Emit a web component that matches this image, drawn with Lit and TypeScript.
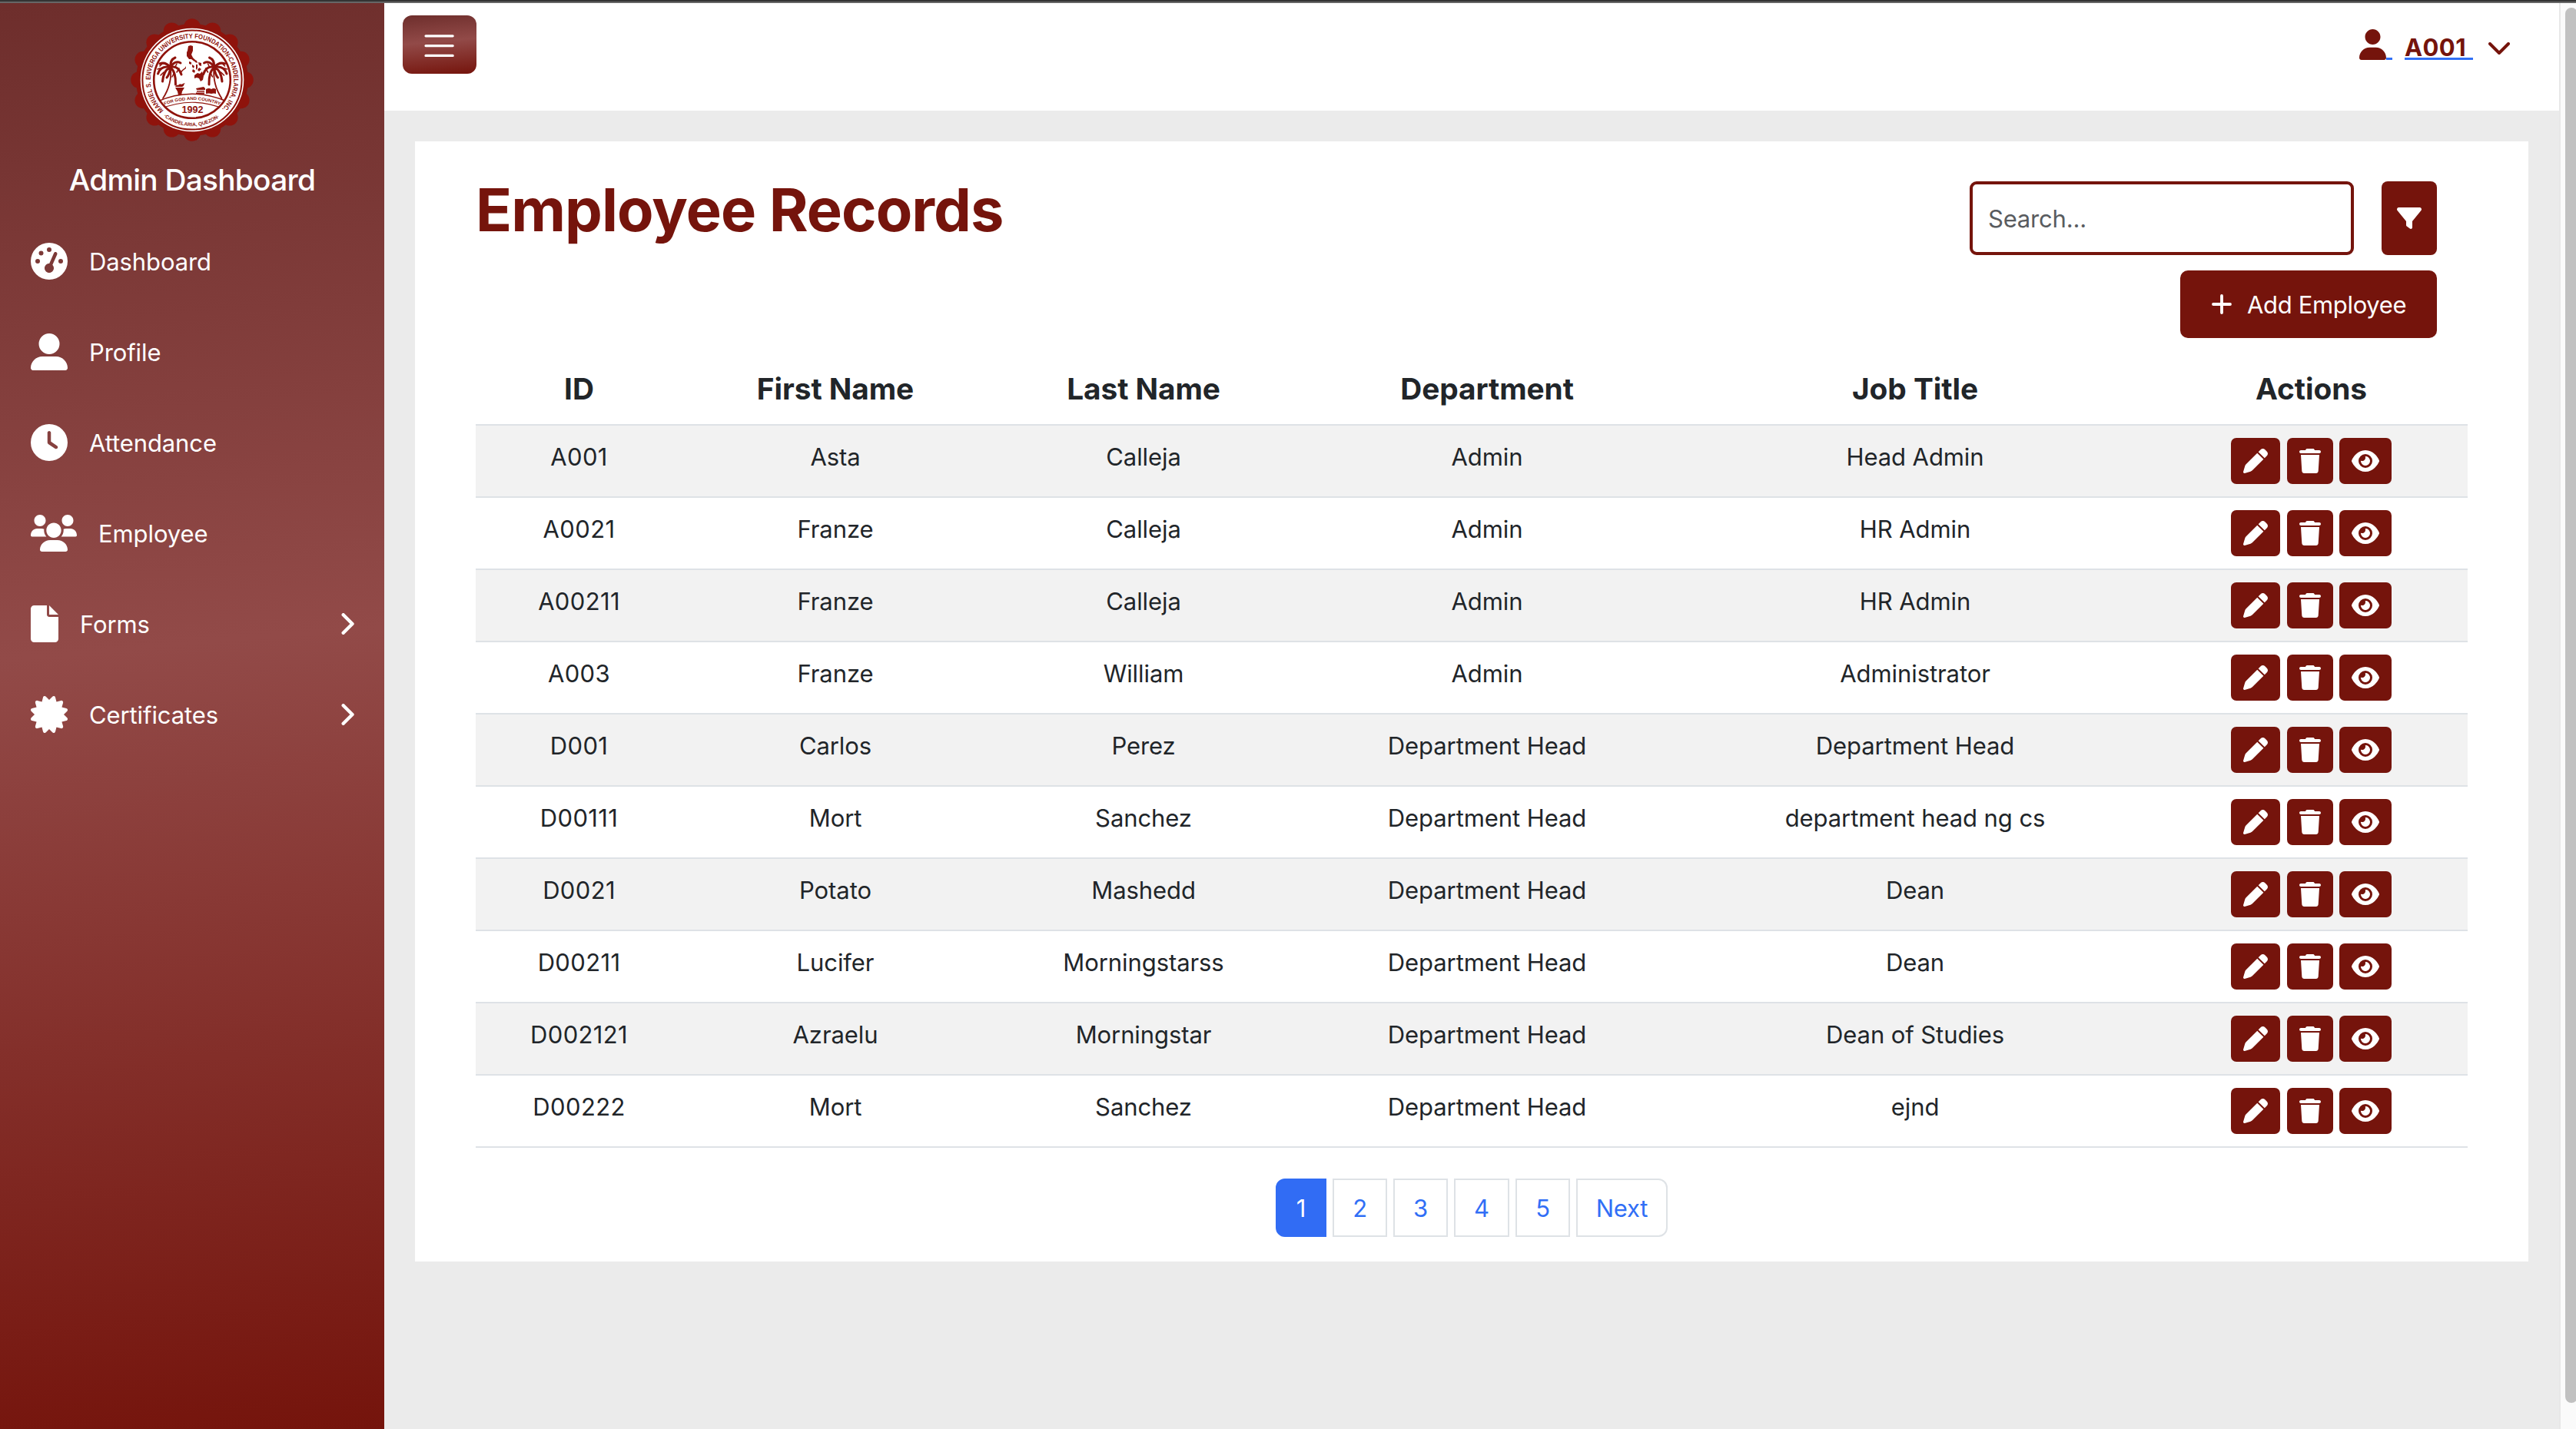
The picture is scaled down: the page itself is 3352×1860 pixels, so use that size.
import { LitElement, html, css, svg } from "lit";
import { customElement } from "lit/decorators.js";

const SEAL = "#8f130c";

interface Employee {
  id: string;
  first: string;
  last: string;
  department: string;
  title: string;
}

const HEADERS = ["ID", "First Name", "Last Name", "Department", "Job Title", "Actions"];

const EMPLOYEES: Employee[] = [
  { id: "A001", first: "Asta", last: "Calleja", department: "Admin", title: "Head Admin" },
  { id: "A0021", first: "Franze", last: "Calleja", department: "Admin", title: "HR Admin" },
  { id: "A00211", first: "Franze", last: "Calleja", department: "Admin", title: "HR Admin" },
  { id: "A003", first: "Franze", last: "William", department: "Admin", title: "Administrator" },
  { id: "D001", first: "Carlos", last: "Perez", department: "Department Head", title: "Department Head" },
  { id: "D00111", first: "Mort", last: "Sanchez", department: "Department Head", title: "department head ng cs" },
  { id: "D0021", first: "Potato", last: "Mashedd", department: "Department Head", title: "Dean" },
  { id: "D00211", first: "Lucifer", last: "Morningstarss", department: "Department Head", title: "Dean" },
  { id: "D002121", first: "Azraelu", last: "Morningstar", department: "Department Head", title: "Dean of Studies" },
  { id: "D00222", first: "Mort", last: "Sanchez", department: "Department Head", title: "ejnd" },
];

/* Solid glyph outlines: [viewBox width, path] on a 512-unit-high box */
const GLYPHS: Record<string, [number, string]> = {
  gauge: [512, "M0 256a256 256 0 1 1 512 0A256 256 0 1 1 0 256zM288 96a32 32 0 1 0 -64 0 32 32 0 1 0 64 0zM256 416c35.3 0 64-28.7 64-64c0-17.4-6.9-33.1-18.1-44.6L366 161.7c5.3-12.1-.2-26.3-12.3-31.6s-26.3 .2-31.6 12.3L257.9 288c-.6 0-1.3 0-1.9 0c-35.3 0-64 28.7-64 64s28.7 64 64 64zM176 144a32 32 0 1 0 -64 0 32 32 0 1 0 64 0zM96 288a32 32 0 1 0 0-64 32 32 0 1 0 0 64zm352-32a32 32 0 1 0 -64 0 32 32 0 1 0 64 0z"],
  person: [512, "M256 288A144 144 0 1 0 256 0a144 144 0 1 0 0 288zm-94.7 32C72.2 320 0 392.2 0 481.3c0 17 13.8 30.7 30.7 30.7H481.3c17 0 30.7-13.8 30.7-30.7C512 392.2 439.8 320 350.7 320H161.3z"],
  clock: [512, "M256 0a256 256 0 1 1 0 512A256 256 0 1 1 256 0zM232 120V256c0 8 4 15.5 10.7 20l96 64c11 7.4 25.9 4.4 33.3-6.7s4.4-25.9-6.7-33.3L280 243.2V120c0-13.3-10.7-24-24-24s-24 10.7-24 24z"],
  people: [640, "M319.9 320c57.41 0 103.1-46.56 103.1-104c0-57.44-46.54-104-103.1-104c-57.41 0-103.1 46.56-103.1 104C215.9 273.4 262.5 320 319.9 320zM369.9 352H270.1C191.6 352 128 411.7 128 485.3C128 500.1 140.7 512 156.4 512h327.2C499.3 512 512 500.1 512 485.3C512 411.7 448.4 352 369.9 352zM512 160c44.18 0 80-35.82 80-80S556.2 0 512 0c-44.18 0-80 35.82-80 80S467.8 160 512 160zM183.9 216c0-5.449 .9824-10.63 1.609-15.91C174.6 194.1 162.6 192 149.9 192H88.08C39.44 192 0 233.8 0 285.3C0 295.6 7.887 304 17.62 304h199.5C196.7 280.2 183.9 249.7 183.9 216zM128 160c44.18 0 80-35.82 80-80S172.2 0 128 0C83.82 0 48 35.82 48 80S83.82 160 128 160zM551.9 192h-61.84c-12.8 0-24.88 3.037-35.86 8.24C454.8 205.5 455.8 210.6 455.8 216c0 33.71-12.78 64.21-33.16 88h199.7C632.1 304 640 295.6 640 285.3C640 233.8 600.6 192 551.9 192z"],
  file: [384, "M256 0v128h128L256 0zM224 128L224 0H48C21.49 0 0 21.49 0 48v416C0 490.5 21.49 512 48 512h288c26.51 0 48-21.49 48-48V160h-127.1C238.3 160 224 145.7 224 128z"],
  badge: [512, "M211 7.3C205 1 196-1.4 187.6 .8s-14.9 8.9-17.1 17.3L154.7 80.6l-62-17.5c-8.4-2.4-17.4 0-23.5 6.1s-8.5 15.1-6.1 23.5l17.5 62L18.1 170.6c-8.4 2.1-15 8.7-17.3 17.1S1 205 7.3 211l46.2 45L7.3 301C1 307-1.4 316 .8 324.4s8.9 14.9 17.3 17.1l62.5 15.8-17.5 62c-2.4 8.4 0 17.4 6.1 23.5s15.1 8.5 23.5 6.1l62-17.5 15.8 62.5c2.1 8.4 8.7 15 17.1 17.3s17.3-.2 23.4-6.4l45-46.2 45 46.2c6.1 6.2 15 8.7 23.4 6.4s14.9-8.9 17.1-17.3l15.8-62.5 62 17.5c8.4 2.4 17.4 0 23.5-6.1s8.5-15.1 6.1-23.5l-17.5-62 62.5-15.8c8.4-2.1 15-8.7 17.3-17.1s-.2-17.4-6.4-23.4l-46.2-45 46.2-45c6.2-6.1 8.7-15 6.4-23.4s-8.9-14.9-17.3-17.1l-62.5-15.8 17.5-62c2.4-8.4 0-17.4-6.1-23.5s-15.1-8.5-23.5-6.1l-62 17.5L341.4 18.1c-2.1-8.4-8.7-15-17.1-17.3S307 1 301 7.3L256 53.5 211 7.3z"],
  user: [448, "M224 256c70.7 0 128-57.31 128-128s-57.3-128-128-128C153.3 0 96 57.31 96 128S153.3 256 224 256zM274.7 304H173.3C77.61 304 0 381.6 0 477.3c0 19.14 15.52 34.67 34.66 34.67h378.7C432.5 512 448 496.5 448 477.3C448 381.6 370.4 304 274.7 304z"],
  filter: [512, "M3.9 54.9C10.5 40.9 24.5 32 40 32H472c15.5 0 29.5 8.9 36.1 22.9s4.6 30.5-5.2 42.5L320 320.9V448c0 12.1-6.8 23.2-17.7 28.6s-23.8 4.3-33.5-3l-64-48c-8.1-6-12.8-15.5-12.8-25.6V320.9L9 97.3C-.7 85.4-2.8 68.8 3.9 54.9z"],
  pen: [512, "M362.7 19.3L314.3 67.7 444.3 197.7l48.4-48.4c25-25 25-65.5 0-90.5L453.3 19.3c-25-25-65.5-25-90.5 0zm-71 71L58.6 323.5c-10.4 10.4-18 23.3-22.2 37.4L1 481.2C-1.5 489.7 .8 498.8 7 505s15.3 8.5 23.7 6.1l120.3-35.4c14.1-4.2 27-11.8 37.4-22.2L421.7 220.3 291.7 90.3z"],
  trash: [448, "M135.2 17.7L128 32H32C14.3 32 0 46.3 0 64S14.3 96 32 96H416c17.7 0 32-14.3 32-32s-14.3-32-32-32H320l-7.2-14.3C307.4 6.8 296.3 0 284.2 0H163.8c-12.1 0-23.2 6.8-28.6 17.7zM416 128H32L53.2 467c1.6 25.3 22.6 45 47.9 45H346.9c25.3 0 46.3-19.7 47.9-45L416 128z"],
  eye: [576, "M288 32c-80.8 0-145.5 36.8-192.6 80.6C48.6 156 17.3 208 2.5 243.7c-3.3 7.9-3.3 16.7 0 24.6C17.3 304 48.6 356 95.4 399.4C142.5 443.2 207.2 480 288 480s145.5-36.8 192.6-80.6c46.8-43.5 78.1-95.4 93-131.1c3.3-7.9 3.3-16.7 0-24.6c-14.9-35.7-46.2-87.7-93-131.1C433.5 68.8 368.8 32 288 32zM144 256a144 144 0 1 1 288 0 144 144 0 1 1 -288 0zm144-64c0 35.3-28.7 64-64 64c-7.1 0-13.9-1.2-20.3-3.3c-5.5-1.8-11.9 1.6-11.7 7.4c.3 6.9 1.3 13.8 3.2 20.7c13.7 51.2 66.4 81.6 117.6 67.9s81.6-66.4 67.9-117.6c-11.1-41.5-47.8-69.4-88.6-71.1c-5.8-.2-9.2 6.1-7.4 11.7c2.1 6.4 3.3 13.2 3.3 20.3z"],
};

const glyph = (name: string, height: number) => {
  const [w, d] = GLYPHS[name];
  return html`<svg class="glyph" width=${(w / 512) * height} height=${height} viewBox="0 0 ${w} 512"><path d=${d}></path></svg>`;
};

const palm = svg`
  <g fill="none" stroke=${SEAL} stroke-linecap="round">
    <path stroke-width="1.8" d="M-28 -16Q-26 6 -38 24"></path>
    <path stroke-width="3" d="M-28.5 -16.5Q-35 -24 -42 -21M-28.5 -16.5Q-41 -19 -44.5 -8M-28.5 -16Q-37 -13 -38.5 2M-28 -16Q-30 -6 -33 -3M-28 -16Q-21 -10 -21.5 6M-28 -16.5Q-18 -19 -14 -7M-28 -17Q-22 -26 -15 -22M-28 -17Q-29 -26 -22 -29"></path>
    <path stroke-width="1.6" d="M-39 -21l-3 3M-42 -15l-3 1M-37 -10l-4 4M-23 -10l-3 6M-17 -15l-3 5M-20 -21l-2 4"></path>
  </g>`;

@customElement("university-seal")
export class UniversitySeal extends LitElement {
  static styles = css`
    :host { display: block; width: 160px; height: 160px; }
    svg { display: block; }
    .rim { font: 700 8.8px "Liberation Sans", sans-serif; }
    .town { font: 700 6.6px "Liberation Sans", sans-serif; }
    .motto { font: 700 5.6px "Liberation Sans", sans-serif; }
    .year { font: 700 12.6px "Liberation Sans", sans-serif; }
  `;

  private at(r: number, deg: number) {
    const a = (deg * Math.PI) / 180;
    return `${(r * Math.sin(a)).toFixed(2)} ${(-r * Math.cos(a)).toFixed(2)}`;
  }

  render() {
    const lobes = Array.from({ length: 16 }, (_, i) => {
      const [x, y] = this.at(69, i * 22.5).split(" ");
      return svg`<circle cx=${x} cy=${y} r="10.8"></circle>`;
    });
    return html`
      <svg width="160" height="160" viewBox="-80 -80 160 160">
        <defs>
          <path id="rim" d="M${this.at(54.2, -137)}A54.2 54.2 0 1 1 ${this.at(54.2, 137)}"></path>
          <path id="town" d="M${this.at(60.2, -142)}A60.2 60.2 0 0 0 ${this.at(60.2, 142)}"></path>
          <path id="motto" d="M-36 32.8Q0 19.4 36 32.8"></path>
          <clipPath id="inner"><circle r="49"></circle></clipPath>
        </defs>
        <g fill=${SEAL}><circle r="73"></circle>${lobes}</g>
        <circle r="67.3" fill="#fff"></circle>
        <circle r="64.6" fill="none" stroke=${SEAL} stroke-width="2"></circle>
        <circle r="49.8" fill="#fff" stroke=${SEAL} stroke-width="2.6"></circle>
        <g fill=${SEAL}>
          <text class="rim"><textPath href="#rim" textLength="256" lengthAdjust="spacingAndGlyphs">MANUEL S. ENVERGA UNIVERSITY FOUNDATION-CANDELARIA, INC.</textPath></text>
          <text class="town"><textPath href="#town" textLength="78" lengthAdjust="spacingAndGlyphs">·CANDELARIA, QUEZON·</textPath></text>
          <text class="motto"><textPath href="#motto" textLength="74" lengthAdjust="spacingAndGlyphs">FOR GOD AND COUNTRY</textPath></text>
          <text class="year" x="0.5" y="42.6" text-anchor="middle">1992</text>
        </g>
        <g clip-path="url(#inner)" fill="none" stroke=${SEAL}>
          <path stroke-width="1.4" d="M-46 28.5Q0 8 46 28.5"></path>
          <path stroke-width="1.2" d="M-42 38Q0 20.5 42 38"></path>
        </g>
        ${palm}
        <g transform="scale(-1 1) translate(-0.5 0)">${palm}</g>
        <g fill=${SEAL}>
          <path d="M-5 -44l3 -1 3 1 0 6 -2 5 2 4 3 3 -1 2 -4 -3 -3 0 -3 -4 0 -5 1 -2z"></path>
          <path d="M-4 -24l3 1 0 3 -3 -1zM2 -27l4 2 1 3 -3 -1zM0 -20l3 2 -1 3 -2 -2zM5 -20l2 0 0 5 -2 2zM8 -23l4 1 0 4 -3 -1zM1 -14l3 2 -1 3 -3 -2zM9 -16l3 2 -3 3 -2 -2z"></path>
          <path d="M3 -6l4 -3 3 1 3 -3 2 6 -1 5 -3 2 -2 -4 -3 -1 -3 1z"></path>
          <path d="M-16 -9l3 -4 4 -3 1 -2 0 3 -4 3 -3 4z"></path>
          <path d="M-22 9c2 -4 5 -1 6 -4 2 2 5 -1 7 -1 -2 1 -1 4 -4 5z"></path>
          <path d="M-22 10h12l-3 5 -1 5h-4l-1 -5z"></path>
          <path d="M5 11l10 -2 2 2v2l-11 0zM6 14h10v1.5h-10zM5 16.5h11v2h-11zM18 12q4 -2 7 0 3 -2 6 0v6q-3 -1 -6 0 -3 -1 -7 0z"></path>
        </g>
      </svg>`;
  }
}

@customElement("side-nav")
export class SideNav extends LitElement {
  static styles = css`
    :host {
      display: flex;
      flex-direction: column;
      align-items: center;
      box-sizing: border-box;
      width: 500px;
      flex: none;
      padding-top: 20px;
      color: #fff;
      background: linear-gradient(175deg, #6e2e2c, #924a48 45%, #75140c);
    }
    .title { margin: 26px 0 23px; font-size: 38.8px; font-weight: 500; line-height: 48px; letter-spacing: -0.72px; }
    .items { align-self: stretch; display: flex; flex-direction: column; }
    .item { display: flex; align-items: center; height: 118px; padding: 0 39px 0 40px; gap: 28px; }
    .label { flex: 1; line-height: 48px; padding-top: 1px; letter-spacing: -0.1px; }
    .glyph { display: block; fill: #fff; overflow: visible; }
    .chev { display: block; fill: none; stroke: #fff; stroke-width: 4.4; stroke-linecap: round; stroke-linejoin: round; }
  `;

  render() {
    const items: [string, string, boolean][] = [
      ["gauge", "Dashboard", false],
      ["person", "Profile", false],
      ["clock", "Attendance", false],
      ["people", "Employee", false],
      ["file", "Forms", true],
      ["badge", "Certificates", true],
    ];
    return html`
      <university-seal></university-seal>
      <div class="title">Admin Dashboard</div>
      <nav class="items">
        ${items.map(([icon, label, more]) => html`
          <div class="item">
            ${glyph(icon, 48)}
            <span class="label">${label}</span>
            ${more ? html`<svg class="chev" width="17" height="28" viewBox="0 0 17 28"><path d="M2.7 2.2L14.5 14L2.7 25.8"></path></svg>` : ""}
          </div>`)}
      </nav>`;
  }
}

@customElement("top-bar")
export class TopBar extends LitElement {
  static styles = css`
    :host { display: flex; justify-content: space-between; align-items: flex-start; box-sizing: border-box; height: 140px; flex: none; padding: 16px 64px 0 24px; background: #fff; }
    .burger { display: flex; align-items: center; justify-content: center; box-sizing: border-box; width: 96px; height: 76px; padding-top: 4px; border-radius: 12px; background: linear-gradient(175deg, #6e2e2c, #924a48 45%, #75140c); }
    .burger svg { display: block; stroke: #fff; stroke-width: 1; stroke-linecap: round; }
    .account { display: flex; align-items: flex-start; margin-top: 18px; }
    .glyph { display: block; fill: #75140c; }
    .stub, .name { box-sizing: border-box; height: 40px; border-bottom: 3px solid #316ff6; }
    .stub { width: 8px; margin-right: 16px; }
    .name { width: 89px; padding-top: 10px; line-height: 27px; font-weight: 700; letter-spacing: 0.4px; color: #75140c; }
    .chev { display: block; margin: 17px 0 0 20px; fill: none; stroke: #75140c; stroke-width: 4; stroke-linecap: round; stroke-linejoin: round; }
  `;

  render() {
    return html`
      <div class="burger">
        <svg width="51.2" height="51.2" viewBox="0 0 16 16"><path d="M2.5 4H13.5M2.5 8H13.5M2.5 12H13.5"></path></svg>
      </div>
      <div class="account">
        ${glyph("user", 40)}
        <span class="stub"></span>
        <span class="name">A001</span>
        <svg class="chev" width="28" height="16" viewBox="0 0 28 16"><path d="M2 2L14 14L26 2"></path></svg>
      </div>`;
  }
}

@customElement("employee-table")
export class EmployeeTable extends LitElement {
  static styles = css`
    :host { display: block; color: #212529; }
    .head, .row { display: grid; grid-template-columns: 269px 398px 404px 490px 624px 407px; box-sizing: border-box; text-align: center; border-bottom: 2px solid #dee2e6; line-height: 48px; }
    .head { height: 114px; padding-top: 42px; font-size: 38.8px; font-weight: 700; letter-spacing: -0.05px; }
    .row { height: 94px; padding-top: 17px; letter-spacing: -0.08px; }
    .row:nth-child(even) { background: #f2f2f2; }
    .id { letter-spacing: 0.35px; }
    .actions { display: flex; justify-content: center; gap: 8.5px; margin-top: -1px; }
    .act { display: flex; align-items: center; justify-content: center; height: 60px; border-radius: 7px; background: #75140c; }
    .pen { width: 64px; }
    .trash { width: 60px; }
    .eye { width: 68px; }
    .glyph { display: block; fill: #fff; }
  `;

  render() {
    return html`
      <div class="head">${HEADERS.map((h) => html`<span>${h}</span>`)}</div>
      ${EMPLOYEES.map((e) => html`
        <div class="row">
          <span class="id">${e.id}</span>
          <span>${e.first}</span>
          <span>${e.last}</span>
          <span>${e.department}</span>
          <span>${e.title}</span>
          <div class="actions">
            ${["pen", "trash", "eye"].map((a) => html`<span class="act ${a}">${glyph(a, 32)}</span>`)}
          </div>
        </div>`)}`;
  }
}

@customElement("page-links")
export class PageLinks extends LitElement {
  static styles = css`
    :host { display: flex; justify-content: center; gap: 8px; margin-top: 40px; }
    .link { box-sizing: border-box; width: 71px; height: 76px; padding-top: 1px; line-height: 72px; text-align: center; border: 2px solid #dee2e6; color: #316ff6; letter-spacing: -0.2px; }
    .current { width: 66px; border-color: #316cf4; border-radius: 12px 0 0 12px; background: #316cf4; color: #fff; }
    .wide { width: 72px; }
    .next { width: 119px; border-radius: 0 12px 12px 0; }
  `;

  render() {
    return html`
      <span class="link current">1</span>
      <span class="link">2</span>
      <span class="link">3</span>
      <span class="link wide">4</span>
      <span class="link">5</span>
      <span class="link next">Next</span>`;
  }
}

@customElement("app-root")
export class AppRoot extends LitElement {
  static styles = css`
    :host { display: flex; flex-direction: column; width: 100%; height: 1860px; overflow: hidden; font: 400 31px Inter, "Liberation Sans", sans-serif; }
    .edge { box-sizing: border-box; flex: none; height: 4px; background: #343434; border-bottom: 2px solid #666; }
    .body { flex: 1; display: flex; min-height: 0; }
    .main { flex: 1; display: flex; flex-direction: column; background: #ebebeb; }
    .card { box-sizing: border-box; height: 1458px; margin: 40px 40px 0; padding: 42px 79px 0; background: #fff; }
    .header { display: flex; justify-content: space-between; height: 214px; }
    .heading { margin: -1px 0 0; font-size: 77.6px; font-weight: 700; line-height: 96px; letter-spacing: -0.95px; color: #75140c; }
    .tools { display: flex; flex-direction: column; align-items: flex-end; gap: 20px; margin: 10px 40px 0 0; }
    .find { display: flex; gap: 36px; }
    .search { box-sizing: border-box; width: 500px; height: 96px; padding: 0 20px; border: 4px solid #75140c; border-radius: 9px; line-height: 89px; letter-spacing: -0.2px; color: #595c5f; }
    .filter { display: flex; align-items: center; justify-content: center; width: 72px; height: 96px; border-radius: 8px; background: #75140c; }
    .add { display: flex; align-items: center; box-sizing: border-box; width: 334px; height: 88px; padding-left: 41px; gap: 20px; border-radius: 10px; background: #75140c; color: #fff; letter-spacing: -0.34px; }
    .plus { display: block; stroke: #fff; stroke-width: 3.8; stroke-linecap: round; }
    .glyph { display: block; fill: #fff; }
    .scroll { box-sizing: border-box; flex: none; width: 22px; padding: 6px 0 0 6px; border-left: 2px solid #e8e8e8; background: #fafafa; overflow: hidden; }
    .thumb { width: 16px; height: 1816px; border-radius: 8px; background: #c1c1c1; }
  `;

  render() {
    return html`
      <div class="edge"></div>
      <div class="body">
        <side-nav></side-nav>
        <div class="main">
          <top-bar></top-bar>
          <section class="card">
            <div class="header">
              <h1 class="heading">Employee Records</h1>
              <div class="tools">
                <div class="find">
                  <div class="search">Search...</div>
                  <div class="filter">${glyph("filter", 32)}</div>
                </div>
                <div class="add">
                  <svg class="plus" width="26" height="26" viewBox="0 0 26 26"><path d="M13 2V24M2 13H24"></path></svg>
                  <span>Add Employee</span>
                </div>
              </div>
            </div>
            <employee-table></employee-table>
            <page-links></page-links>
          </section>
        </div>
        <div class="scroll"><div class="thumb"></div></div>
      </div>`;
  }
}
